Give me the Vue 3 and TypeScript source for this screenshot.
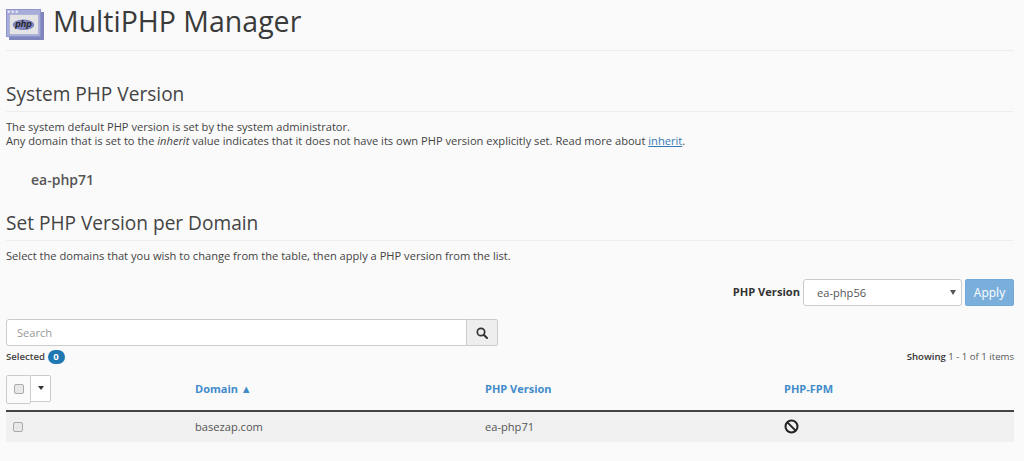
<script setup lang="ts">
const intro = 'Any domain that is set to the ';
</script>

<template>
  <div class="page">
    <header class="title-row">
      <svg class="app-icon" width="38" height="31" viewBox="0 0 38 31">
        <rect x="3" y="3" width="35" height="28" fill="#7f86bd" />
        <rect x="0.5" y="0.5" width="34" height="27" fill="#a9addb" stroke="#8f95c8" />
        <rect x="3.25" y="5.25" width="29.5" height="20.5" fill="#e4e4e6" stroke="#8d92c0" stroke-width="0.5" />
        <rect x="1.7" y="1.7" width="2" height="2" fill="#f2f2f8" />
        <rect x="5.7" y="1.7" width="2" height="2" fill="#f2f2f8" />
        <rect x="9.7" y="1.7" width="2" height="2" fill="#f2f2f8" />
        <ellipse cx="17.5" cy="15.8" rx="10.8" ry="5.3" fill="#7d83bb" />
        <text x="17.5" y="18.3" text-anchor="middle" class="php-mark">php</text>
      </svg>
      <h1>MultiPHP Manager</h1>
    </header>

    <section class="system">
      <h2>System PHP Version</h2>
      <p class="copy">
        The system default PHP version is set by the system administrator.<br />
        {{ intro }}<em>inherit</em> value indicates that it does not have its own PHP version explicitly set. Read more about <a href="#">inherit</a>.
      </p>
      <div class="current">ea-php71</div>
    </section>

    <section class="domains">
      <h2>Set PHP Version per Domain</h2>
      <p class="copy">Select the domains that you wish to change from the table, then apply a PHP version from the list.</p>

      <div class="version-row">
        <label>PHP Version</label>
        <div class="select">
          <span>ea-php56</span>
          <i class="select-caret"></i>
        </div>
        <button class="apply" type="button">Apply</button>
      </div>

      <div class="search">
        <div class="search-input">Search</div>
        <button class="search-button" type="button" aria-label="Search">
          <svg width="12" height="12" viewBox="0 0 12 12" fill="none" stroke="#333" stroke-width="1.7">
            <circle cx="5" cy="5" r="3.7" />
            <path d="M7.7 7.7 11 11" stroke-linecap="round" stroke-width="2" />
          </svg>
        </button>
      </div>

      <div class="meta">
        <div class="selected">Selected <span class="badge">0</span></div>
        <div class="showing"><b>Showing</b> 1 - 1 of 1 items</div>
      </div>

      <div class="table">
        <div class="thead">
          <div class="cell check-cell">
            <div class="bulk">
              <span class="bulk-check"><span class="box"></span></span>
              <span class="bulk-caret"><i></i></span>
            </div>
          </div>
          <div class="cell th">Domain ▲</div>
          <div class="cell th">PHP Version</div>
          <div class="cell th">PHP-FPM</div>
        </div>
        <div class="tbody">
          <div class="cell row-check"><span class="box"></span></div>
          <div class="cell">basezap.com</div>
          <div class="cell">ea-php71</div>
          <div class="cell">
            <svg width="15" height="15" viewBox="0 0 15 15" fill="none" stroke="#222" stroke-width="2">
              <circle cx="7.5" cy="7.5" r="6" />
              <path d="M3.4 3.4 11.6 11.6" />
            </svg>
          </div>
        </div>
      </div>
    </section>
  </div>
</template>

<style>
html, body {
  margin: 0;
  background: #fafafa;
}
</style>

<style scoped>
.page {
  box-sizing: border-box;
  width: 1024px;
  height: 461px;
  overflow: hidden;
  padding: 0 10px 0 6px;
  font-family: "Open Sans", sans-serif;
  font-size: 11.12px;
  line-height: 14px;
  color: #444;
  background: #fafafa;
}
.title-row {
  display: flex;
  align-items: center;
  gap: 9px;
  height: 51px;
  padding-bottom: 9px;
  box-sizing: border-box;
  border-bottom: 1px solid #eee;
}
.app-icon { flex: none; margin-top: 8px; }
.php-mark {
  font-family: "Liberation Sans", sans-serif;
  font-size: 9px;
  font-style: italic;
  font-weight: 700;
  fill: #222;
}
h1 {
  margin: 0;
  font-size: 28.5px;
  line-height: 40px;
  font-weight: 400;
  color: #3a3a3a;
}
h2 {
  margin: 0;
  font-size: 19.1px;
  line-height: 26px;
  font-weight: 400;
  padding-bottom: 4px;
  border-bottom: 1px solid #eee;
  color: #444;
}
.system { margin-top: 30px; }
.copy {
  margin: 8px 0 0;
}
a { color: #337ab7; text-decoration: underline; }
.current {
  margin: 22px 0 0 25px;
  font-size: 14px;
  line-height: 20px;
  font-weight: 600;
  color: #555;
}
.domains { margin-top: 20px; }
.domains .copy { margin-top: 8px; }
.version-row {
  display: flex;
  justify-content: flex-end;
  align-items: center;
  margin-top: 16px;
  height: 27px;
}
.version-row label { font-weight: 700; color: #333; margin-right: 3px; margin-top: -2px; }
.select {
  box-sizing: border-box;
  width: 159px;
  height: 27px;
  margin-right: 3px;
  padding-left: 13px;
  display: flex;
  align-items: center;
  justify-content: space-between;
  color: #555;
  background: #fff;
  border: 1px solid #ccc;
  border-radius: 3px;
}
.select-caret {
  width: 0;
  height: 0;
  margin-right: 5px;
  border: 3.5px solid transparent;
  border-top: 5px solid #555;
  border-bottom: 0;
}
.apply {
  box-sizing: border-box;
  width: 49px;
  height: 27px;
  padding: 0;
  border: 1px solid #71a9d9;
  border-radius: 2px;
  background: #7aafdc;
  color: #fff;
  font: 12px "Open Sans", sans-serif;
}
.search {
  display: flex;
  width: 492px;
  height: 27px;
  margin-top: 13px;
}
.search-input {
  box-sizing: border-box;
  flex: 1;
  padding-left: 10px;
  line-height: 25px;
  color: #999;
  background: #fff;
  border: 1px solid #ccc;
  border-radius: 3px 0 0 3px;
}
.search-button {
  box-sizing: border-box;
  width: 32px;
  padding: 0;
  margin-left: -1px;
  background: #eee;
  border: 1px solid #ccc;
  border-radius: 0 2px 2px 0;
  display: flex;
  align-items: center;
  justify-content: center;
}
.meta {
  display: flex;
  justify-content: space-between;
  align-items: center;
  margin-top: 3px;
  height: 15px;
  font-size: 9.6px;
}
.selected { font-weight: 600; color: #444; }
.badge {
  display: inline-block;
  width: 17px;
  height: 14px;
  border-radius: 7px;
  text-align: center;
  line-height: 14px;
  color: #fff;
  background: #1f78b4;
  font-weight: 700;
}
.showing { color: #555; }
.showing b { font-weight: 600; color: #333; }
.thead, .tbody {
  display: grid;
  grid-template-columns: 181px 290px 299px 238px;
  align-items: center;
}
.thead {
  height: 42px;
  margin-top: 4px;
  border-bottom: 2px solid #444;
}
.tbody {
  box-sizing: border-box;
  height: 30px;
  padding-bottom: 1px;
  background: #f0f0f0;
  font-size: 11.12px;
  color: #555;
}
.cell { padding-left: 8px; }
.cell svg { display: block; }
.th {
  color: #428bca;
  font-weight: 700;
  font-size: 11px;
}
.check-cell { padding-left: 0; }
.bulk { display: flex; align-items: flex-start; }
.bulk-check {
  box-sizing: border-box;
  width: 25px;
  height: 29px;
  display: flex;
  align-items: center;
  justify-content: center;
  background: #fafafa;
  border: 1px solid #ccc;
  border-radius: 2px;
}
.bulk-caret {
  box-sizing: border-box;
  width: 21px;
  height: 27px;
  margin-left: -1px;
  display: flex;
  align-items: center;
  justify-content: center;
  background: #fff;
  border: 1px solid #ccc;
  border-radius: 0 2px 2px 0;
}
.bulk-caret i {
  width: 0;
  height: 0;
  border: 3.5px solid transparent;
  border-top: 4px solid #333;
  border-bottom: 0;
}
.box {
  display: block;
  box-sizing: border-box;
  width: 10px;
  height: 10px;
  background: #e8e8e8;
  border: 1px solid #aaa;
  border-radius: 2px;
}
.row-check { padding-left: 7px; }
</style>
